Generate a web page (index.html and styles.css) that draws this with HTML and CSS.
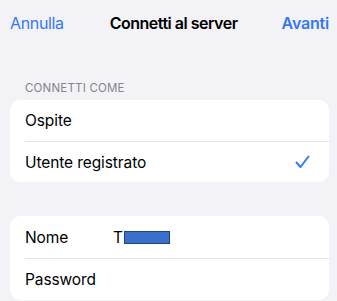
FILE: index.html
```html
<!DOCTYPE html>
<html lang="it">
<head>
    <meta charset="UTF-8">
    <meta name="viewport" content="width=device-width, initial-scale=1.0">
    <title>Connetti al server</title>
    <link rel="stylesheet" href="styles.css">
</head>
<body>
    <div class="nav">
        <span class="nav-btn">Annulla</span>
        <span class="nav-title">Connetti al server</span>
        <span class="nav-btn nav-done">Avanti</span>
    </div>

    <div class="section-label">CONNETTI COME</div>
    <div class="card">
        <div class="row">Ospite</div>
        <div class="row">
            <span>Utente registrato</span>
            <svg class="check" width="15" height="14" viewBox="0 0 15 14">
                <path d="M1.5 7.5 L5.5 12 L13.5 1.5" fill="none" stroke="#3478f6" stroke-width="2" stroke-linecap="round" stroke-linejoin="round"/>
            </svg>
        </div>
    </div>

    <div class="card card-login">
        <div class="row">
            <span class="field-label">Nome</span>
            <span class="field-value">T<span class="redact"></span></span>
        </div>
        <div class="row">
            <span class="field-label">Password</span>
        </div>
    </div>
</body>
</html>
```

FILE: styles.css
```css
* {
    margin: 0;
    padding: 0;
    box-sizing: border-box;
}

body {
    font-family: 'Inter', 'Noto Sans', sans-serif;
    background: #f2f2f7;
    color: #000;
    width: 337px;
    height: 301px;
    overflow: hidden;
}

.nav {
    display: flex;
    justify-content: space-between;
    align-items: center;
    height: 46px;
    padding: 0 8px 0 10px;
    font-size: 16px;
    letter-spacing: -0.35px;
}

.nav-btn {
    color: #3478f6;
}

.nav-done {
    font-weight: 600;
    letter-spacing: -0.2px;
}

.nav-title {
    font-weight: 600;
    margin-left: 2px;
    letter-spacing: -0.5px;
}

.section-label {
    font-size: 11.5px;
    color: #85858a;
    padding: 35px 0 0 25px;
    height: 54px;
    letter-spacing: 0.2px;
}

.card {
    background: #fff;
    border-radius: 10px;
    margin: 0 8px 0 10px;
    padding-left: 15px;
}

.card-login {
    margin-top: 34px;
}

.row {
    display: flex;
    align-items: center;
    justify-content: space-between;
    height: 41px;
    font-size: 15.5px;
    padding-right: 19px;
    letter-spacing: -0.1px;
}

.row + .row {
    border-top: 1px solid #e3e3e8;
}

.card-login .row {
    justify-content: flex-start;
    height: 42px;
}

.field-label {
    width: 88px;
}

.field-value {
    display: flex;
    align-items: center;
}

.redact {
    display: inline-block;
    width: 46px;
    height: 13px;
    margin-left: 1px;
    background: #3a6fcc;
    border: 1px solid #24427a;
}

.check {
    display: block;
}
```
